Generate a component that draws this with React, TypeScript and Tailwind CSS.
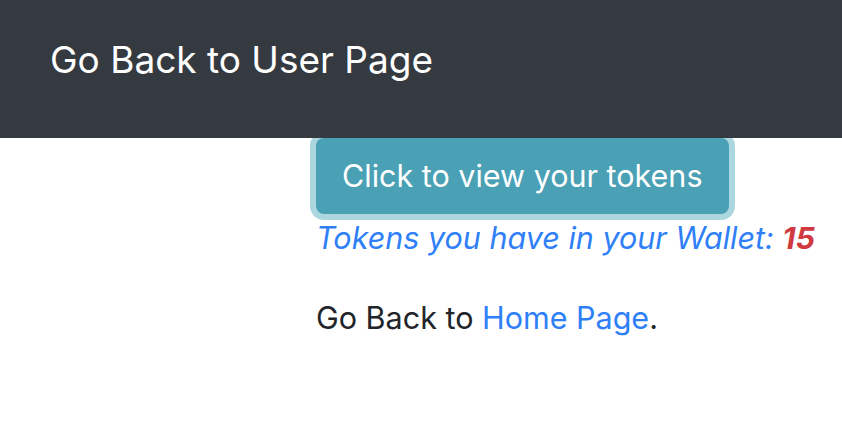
export default function App() {
  return (
    <div className="min-h-[436px] bg-white font-['Inter','Liberation_Sans',sans-serif]">
      <nav className="relative z-10 h-[138px] bg-[#343a40] pl-[50px] pt-[34px]">
        <a className="text-[37px] leading-[52px] text-white">Go Back to User Page</a>
      </nav>
      <div className="pl-[316px]">
        <button className="relative h-[76px] rounded-[8px] bg-[#4aa0b5] px-[26px] text-[30.5px] text-white shadow-[0_0_0_6px_#acd7e1]">
          Click to view your tokens
        </button>
        <p className="mb-[32px] text-[30.5px] italic leading-[48px] text-[#2f7ff7]">
          Tokens you have in your Wallet: <b className="font-bold text-[#d0393f]">15</b>
        </p>
        <p className="text-[30.5px] leading-[48px] text-[#212529]">
          Go Back to <a className="text-[#2f7ff7]">Home Page</a>.
        </p>
      </div>
    </div>
  );
}
